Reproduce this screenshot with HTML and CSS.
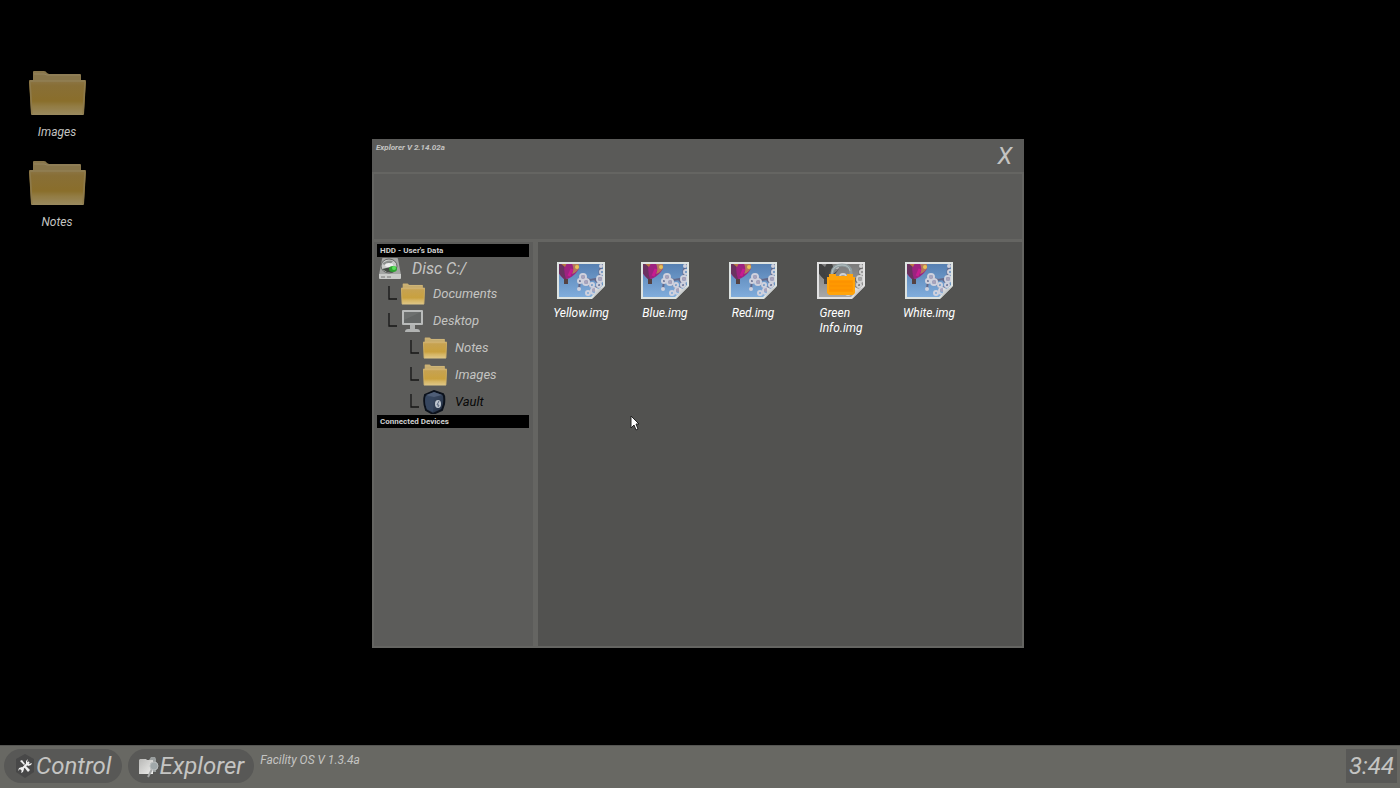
FILE: index.html
```html
<!DOCTYPE html>
<html lang="en">
<head>
    <meta charset="UTF-8">
    <meta name="viewport" content="width=device-width, initial-scale=1.0">
    <title>Facility OS</title>
    <link rel="stylesheet" href="styles.css">
</head>
<body>

<!-- Shared icons -->
<svg class="icon-defs" aria-hidden="true">
    <defs>
        <linearGradient id="folderFront" x1="0" y1="0" x2="0" y2="1">
            <stop offset="0" stop-color="#c3a564"/>
            <stop offset="0.15" stop-color="#bd9a4c"/>
            <stop offset="0.6" stop-color="#bf993c"/>
            <stop offset="0.75" stop-color="#cbac5e"/>
            <stop offset="1" stop-color="#d5bf83"/>
        </linearGradient>
        <linearGradient id="sky" x1="0" y1="0" x2="0" y2="1">
            <stop offset="0" stop-color="#5680b2"/>
            <stop offset="1" stop-color="#80addc"/>
        </linearGradient>
        <linearGradient id="curl" x1="0" y1="0" x2="1" y2="1">
            <stop offset="0" stop-color="#ffffff"/>
            <stop offset="0.6" stop-color="#b9bcbd"/>
        </linearGradient>
        <linearGradient id="vaultSide" x1="0" y1="0" x2="1" y2="1">
            <stop offset="0" stop-color="#46566f"/>
            <stop offset="1" stop-color="#202c40"/>
        </linearGradient>
        <linearGradient id="whiteFolder" x1="0" y1="0" x2="1" y2="1">
            <stop offset="0" stop-color="#b8b8b6"/>
            <stop offset="1" stop-color="#eeeeec"/>
        </linearGradient>
        <filter id="soft"><feGaussianBlur stdDeviation="0.7"/></filter>
        <clipPath id="photoClip"><path d="M2 2H46V23L34 35H2Z"/></clipPath>
    </defs>

    <symbol id="folder" viewBox="0 0 57 46" preserveAspectRatio="none">
        <path d="M4 14V2Q4 1 5 1H15Q17 1 18 3L20 4H51Q52 4 52 5V14Z" fill="#bda468"/>
        <path d="M5 4H15L18 5H51" fill="none" stroke="#cdb784" stroke-width="1"/>
        <path d="M0 11Q0 10 1 10H56Q57 10 57 11L55 44Q55 45 54 45H3Q2 45 2 44Z" fill="url(#folderFront)"/>
        <path d="M1 11H56" stroke="#cdb680" stroke-width="1"/>
        <path d="M1 12L3 44M56 12L54 44" fill="none" stroke="#c5aa68" stroke-width="1.5"/>
    </symbol>

    <symbol id="photo" viewBox="0 0 48 37">
        <path d="M0 0H48V24L35 37H0Z" fill="#dde3e1"/>
        <g clip-path="url(#photoClip)">
            <rect x="2" y="2" width="44" height="33" fill="url(#sky)"/>
            <g filter="url(#soft)">
                <path d="M1 0H21Q24 6 19 11Q14 16 10 17H7Q2 13 1 9Z" fill="#9c2380"/>
                <path d="M1 0H8Q6 8 9 17H7Q2 12 1 9Z" fill="#6b3060"/>
                <path d="M14 0H21Q24 5 20 9Q17 12 15 12Q18 6 14 0Z" fill="#b3785c"/>
                <path d="M3 1H10L8 5Z" fill="#b87843"/>
                <circle cx="20" cy="5" r="2" fill="#e7c257"/>
                <path d="M15 7L12 14" stroke="#c81c90" stroke-width="3"/>
                <rect x="7" y="17" width="4" height="5" fill="#554343"/>
                <path d="M47 2Q40 7 44 16L33 18L25 15M29 19L36 27L45 22M38 18L44 23M23 18L22 27" fill="none" stroke="#64698a" stroke-width="2"/>
                <g fill="none" stroke="#cfd1dd" stroke-width="2">
                    <circle cx="26" cy="15" r="3"/>
                    <circle cx="23" cy="19" r="2"/>
                    <circle cx="29" cy="20" r="3"/>
                    <circle cx="22" cy="27" r="1"/>
                    <circle cx="35" cy="23" r="2"/>
                    <circle cx="43" cy="17" r="3"/>
                    <circle cx="45" cy="10" r="2"/>
                    <circle cx="44" cy="4" r="1"/>
                    <circle cx="37" cy="29" r="3"/>
                    <circle cx="31" cy="31" r="2"/>
                    <circle cx="42" cy="23" r="2"/>
                </g>
                <g fill="#a9a4bc">
                    <circle cx="26" cy="15" r="2"/>
                    <circle cx="29" cy="20" r="2"/>
                    <circle cx="43" cy="17" r="2"/>
                    <circle cx="37" cy="28" r="2"/>
                </g>
            </g>
        </g>
        <path d="M48 24L35 37Q39 32 38 26Q43 28 48 24Z" fill="url(#curl)"/>
    </symbol>

    <symbol id="elbow" viewBox="0 0 9 15">
        <path d="M1 0V13H9" fill="none" stroke="#161616" stroke-width="1.3"/>
    </symbol>
</svg>

<main class="desktop">
    <nav class="shortcuts">
        <button class="shortcut">
            <svg class="shortcut-icon"><use href="#folder"/></svg>
            <span>Images</span>
        </button>
        <button class="shortcut">
            <svg class="shortcut-icon"><use href="#folder"/></svg>
            <span>Notes</span>
        </button>
    </nav>

    <section class="window">
        <header class="titlebar">
            <h1 class="title">Explorer V 2.14.02a</h1>
            <button class="close">X</button>
        </header>
        <div class="toolbar"></div>
        <div class="panes">
            <aside class="sidebar">
                <h2 class="group">HDD - User's Data</h2>
                <button class="drive">
                    <svg class="drive-icon" viewBox="0 0 22 22">
                        <path d="M3 1Q3 0 4 0H18Q19 0 19 1L22 17H0Z" fill="#a4a6a4"/>
                        <path d="M0 16H22V20Q22 21 21 21H1Q0 21 0 20Z" fill="#c9cbc9"/>
                        <path d="M2 19H6M8 19H12" stroke="#777" stroke-width="1"/>
                        <ellipse cx="10" cy="8" rx="8" ry="7" fill="#c9cbc9" stroke="#636563" stroke-width="1"/>
                        <path d="M3 6Q8 1 14 3L10 8Z" fill="#8a8e8b"/>
                        <path d="M3 11Q9 16 15 14L12 9Z" fill="#434c44"/>
                        <ellipse cx="10" cy="7" rx="4" ry="2" fill="#eeeeee"/>
                        <ellipse cx="14" cy="11" rx="4" ry="3" fill="#2fa332"/>
                        <circle cx="15" cy="10" r="2" fill="#5be05c"/>
                    </svg>
                    <span>Disc C:/</span>
                </button>
                <ul class="tree">
                    <li>
                        <button class="node">
                            <svg class="elbow"><use href="#elbow"/></svg>
                            <svg class="node-icon folder-small"><use href="#folder"/></svg>
                            <span>Documents</span>
                        </button>
                    </li>
                    <li>
                        <button class="node">
                            <svg class="elbow"><use href="#elbow"/></svg>
                            <svg class="node-icon" viewBox="0 0 24 24">
                                <rect x="1" y="1" width="21" height="15" rx="1" fill="#b9bbba"/>
                                <rect x="3" y="3" width="17" height="11" fill="#636665"/>
                                <path d="M3 3H20L3 11Z" fill="#6d706f"/>
                                <path d="M9 16H14V20H16Q19 20 19 23H4Q4 20 7 20H9Z" fill="#b1b3b2"/>
                            </svg>
                            <span>Desktop</span>
                        </button>
                        <ul class="tree subtree">
                            <li>
                                <button class="node">
                                    <svg class="elbow"><use href="#elbow"/></svg>
                                    <svg class="node-icon folder-small"><use href="#folder"/></svg>
                                    <span>Notes</span>
                                </button>
                            </li>
                            <li>
                                <button class="node">
                                    <svg class="elbow"><use href="#elbow"/></svg>
                                    <svg class="node-icon folder-small"><use href="#folder"/></svg>
                                    <span>Images</span>
                                </button>
                            </li>
                            <li>
                                <button class="node vault">
                                    <svg class="elbow"><use href="#elbow"/></svg>
                                    <svg class="node-icon" viewBox="0 0 24 24">
                                        <path d="M2 5L11 1L20 4Q22 6 21 14L19 20L10 24L3 20Q0 12 2 5Z" fill="url(#vaultSide)" stroke="#0b111b" stroke-width="2"/>
                                        <path d="M3 5L11 2L19 5L11 7Z" fill="#4f5e77"/>
                                        <path d="M3 6L11 8L10 22L4 19Q1 12 3 6Z" fill="#36465f"/>
                                        <ellipse cx="15" cy="14" rx="3" ry="4" fill="#bfc7d0"/>
                                        <path d="M16 11L14 15H16L15 17" fill="none" stroke="#5b6880" stroke-width="1"/>
                                    </svg>
                                    <span>Vault</span>
                                </button>
                            </li>
                        </ul>
                    </li>
                </ul>
                <h2 class="group">Connected Devices</h2>
            </aside>

            <div class="files">
                <button class="file">
                    <svg class="file-icon"><use href="#photo"/></svg>
                    <span>Yellow.img</span>
                </button>
                <button class="file">
                    <svg class="file-icon"><use href="#photo"/></svg>
                    <span>Blue.img</span>
                </button>
                <button class="file">
                    <svg class="file-icon"><use href="#photo"/></svg>
                    <span>Red.img</span>
                </button>
                <button class="file">
                    <svg class="file-icon" viewBox="0 0 48 37">
                        <use class="locked" href="#photo" width="48" height="37"/>
                        <path d="M15 14V11Q16 3 25 3Q34 3 34 11V14" fill="none" stroke="#8f9da0" stroke-width="3"/>
                        <path d="M15 13V11Q16 3 25 3Q32 3 33 9" fill="none" stroke="#b3bfc0" stroke-width="1"/>
                        <path d="M12 12H19V14H30V12H36V15H38V31L36 33H12L10 31V15H12Z" fill="#ffa40c"/>
                        <path d="M12 18H36V30H12Z" fill="#ff9800"/>
                        <path d="M13 20H35M13 24H35M13 28H35" stroke="#fb8f00" stroke-width="1"/>
                    </svg>
                    <span>Green<br>Info.img</span>
                </button>
                <button class="file">
                    <svg class="file-icon"><use href="#photo"/></svg>
                    <span>White.img</span>
                </button>
            </div>
        </div>
    </section>

    <svg class="cursor" viewBox="0 0 10 16">
        <path d="M1 1V13L4 10L6 15L8 14L6 9H9Z" fill="#fff" stroke="#222" stroke-width="1"/>
    </svg>
</main>

<footer class="taskbar">
    <button class="task">
        <svg class="task-icon" viewBox="0 0 20 24">
            <path d="M10 0L19 5V18L10 24L1 18V5Z" fill="#484848"/>
            <path d="M14 8L6 16" stroke="#f1f1f1" stroke-width="2"/>
            <path d="M5 7L7 6L10 10L9 11Z" fill="#f1f1f1"/>
            <path d="M10 11L15 16L13 18L9 13Z" fill="#f1f1f1"/>
            <path d="M13 5L12 8L14 10L17 9L16 11L13 12L11 10L11 7Z" fill="#f1f1f1"/>
            <path d="M4 14L7 13L9 15L8 18L6 19L7 16L5 15L3 17Z" fill="#f1f1f1"/>
        </svg>
        <span>Control</span>
    </button>
    <button class="task">
        <svg class="task-icon" viewBox="0 0 20 24">
            <path d="M10 6L12 3H16L17 5V18H10Z" fill="#9a9f9f"/>
            <path d="M0 6L1 5H7L8 6H14V20H0Z" fill="url(#whiteFolder)"/>
            <path d="M13 15L9 23" stroke="#a5a7a7" stroke-width="2"/>
            <circle cx="15" cy="12" r="4" fill="#a0a8aa" stroke="#b9bdbe" stroke-width="1"/>
        </svg>
        <span>Explorer</span>
    </button>
    <span class="version">Facility OS V 1.3.4a</span>
    <time class="clock">3:44</time>
</footer>

</body>
</html>
```
FILE: styles.css
```css
* {
    box-sizing: border-box;
}

body {
    margin: 0;
    height: 100vh;
    display: flex;
    flex-direction: column;
    overflow: hidden;
    background-color: #000;
    color: #c4c4c2;
    font-family: Roboto, "Liberation Sans", sans-serif;
    font-style: italic;
    font-size: 12px;
}

button {
    padding: 0;
    border: none;
    background: none;
    color: inherit;
    font: inherit;
    cursor: pointer;
}

h1, h2, ul {
    margin: 0;
    padding: 0;
    list-style: none;
}

svg {
    display: block;
    flex: none;
}

.icon-defs {
    position: absolute;
    width: 0;
    height: 0;
}

/* Desktop */
.desktop {
    position: relative;
    flex: 1;
    padding: 70px 28px;
}

.shortcuts {
    display: flex;
    flex-direction: column;
    align-items: flex-start;
    gap: 20px;
}

.shortcut {
    width: 58px;
    display: flex;
    flex-direction: column;
    align-items: center;
    gap: 9px;
    line-height: 15px;
}

.shortcut-icon {
    width: 57px;
    height: 46px;
    filter: brightness(0.72);
}

/* Explorer window */
.window {
    position: absolute;
    top: 139px;
    right: 376px;
    bottom: 97px;
    left: 372px;
    display: flex;
    flex-direction: column;
    border: 2px solid #656562;
    border-top: none;
    background-color: #656562;
}

.titlebar {
    display: flex;
    justify-content: space-between;
    height: 33px;
    margin: 0 -2px;
    padding: 0 12px 0 4px;
    background-color: #5a5a58;
}

.title {
    padding-top: 2px;
    font-size: 8px;
    line-height: 13px;
    font-weight: bold;
}

.close {
    font-size: 24px;
    line-height: 35px;
}

.toolbar {
    height: 65px;
    margin: 2px 0 3px;
    background-color: #5b5b59;
}

.panes {
    flex: 1;
    display: flex;
    gap: 5px;
}

.sidebar {
    width: 159px;
    padding: 2px 4px 0 3px;
    background-color: #5c5c5a;
}

.group {
    padding-left: 3px;
    background-color: #000;
    color: #cfcfcf;
    font-size: 8px;
    line-height: 13px;
    font-style: normal;
    font-weight: bold;
}

.drive {
    display: flex;
    align-items: center;
    gap: 11px;
    height: 23px;
    padding-left: 2px;
    font-size: 16px;
}

.drive-icon {
    width: 22px;
    height: 22px;
}

.tree {
    padding-left: 11px;
    font-size: 13px;
}

.subtree {
    padding-left: 22px;
}

.node {
    display: flex;
    align-items: center;
    height: 27px;
}

.elbow {
    width: 9px;
    height: 15px;
    margin-right: 4px;
}

.node-icon {
    width: 24px;
    height: 24px;
    margin-right: 8px;
}

.folder-small {
    height: 22px;
    filter: brightness(1.05);
}

.vault {
    color: #080808;
}

.files {
    flex: 1;
    display: grid;
    grid-template-columns: 80px repeat(4, 88px);
    align-content: start;
    padding: 20px 3px;
    background-color: #525250;
    color: #fff;
}

.file {
    display: flex;
    flex-direction: column;
    align-items: center;
    gap: 7px;
    line-height: 15px;
    text-align: left;
}

.file-icon {
    width: 48px;
    height: 37px;
}

.locked {
    filter: grayscale(1);
}

.cursor {
    position: absolute;
    top: 415px;
    left: 630px;
    width: 10px;
    height: 16px;
}

/* Taskbar */
.taskbar {
    display: flex;
    gap: 6px;
    height: 43px;
    padding: 3px 3px 5px 4px;
    border-top: 1px solid #555552;
    background-color: #686863;
}

.task {
    display: flex;
    align-items: center;
    height: 34px;
    padding: 0 10px;
    border-radius: 17px;
    background-color: #585856;
    font-size: 24px;
}

.task-icon {
    width: 22px;
    height: 24px;
}

.version {
    line-height: 22px;
}

.clock {
    margin-left: auto;
    padding: 0 3px;
    background-color: #585856;
    font-size: 24px;
    line-height: 34px;
}
```
